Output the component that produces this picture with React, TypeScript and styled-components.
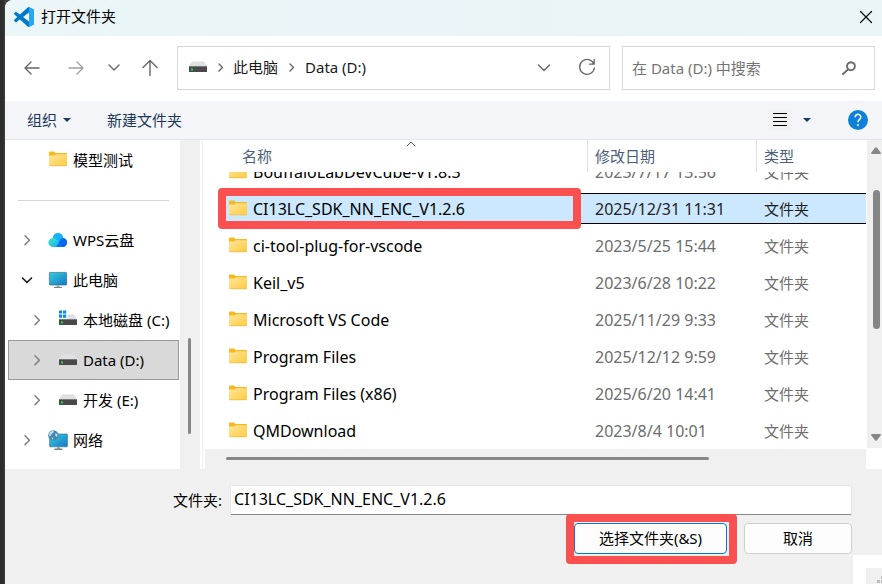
import React, { useState } from "react";
import styled, { createGlobalStyle, css } from "styled-components";

const GlobalStyle = createGlobalStyle`
  *, *::before, *::after { box-sizing: border-box; }
  body { margin: 0; background: #2b2b2b; }
  body, button, input, table {
    font-family: "Noto Sans", "Noto Sans CJK SC", sans-serif;
    font-size: 15px;
    line-height: 20px;
    color: #000;
  }
  button { padding: 0; border: 0; background: none; cursor: default; }
  svg { display: block; flex: none; }
`;

const Desktop = styled.div`
  min-height: 100vh;
  display: flex;
  padding-left: 5px;
  background: linear-gradient(90deg, #2d2d2d 3px, #404040 5px);
`;

const Dialog = styled.main`
  flex: 1;
  min-width: 0;
  display: flex;
  flex-direction: column;
  overflow: hidden;
  border-top-left-radius: 8px;
  background: #f0f0f0;
`;

const TitleBar = styled.header`
  display: flex;
  align-items: center;
  gap: 7px;
  height: 36px;
  padding: 0 8px 2px 9px;
  background: linear-gradient(90deg, #eaf6f7, #ebf4f8 40%, #e9f5f6);
`;

const Title = styled.h1`
  flex: 1;
  margin: 0;
  padding-bottom: 2px;
  font-size: 15px;
  line-height: 20px;
  font-weight: 400;
`;

const IconButton = styled.button<{ $w?: number }>`
  display: flex;
  align-items: center;
  justify-content: center;
  width: ${(p) => p.$w ?? 20}px;
  height: 20px;
  color: inherit;
`;

const NavBar = styled.nav`
  display: grid;
  grid-template-columns: 143px minmax(0, 433fr) minmax(0, 253fr);
  align-items: center;
  column-gap: 12px;
  padding: 10px 7px 11px 17px;
  background: #fff;
  color: #666;
`;

const NavButtons = styled.div`
  display: flex;
  align-items: center;
  gap: 19px;
`;

const fieldBox = css`
  display: flex;
  align-items: center;
  height: 44px;
  border: 1px solid #d9d9d9;
  background: #fff;
`;

const AddressBar = styled.div`
  ${fieldBox}
  padding: 0 12px 2px 10px;
  gap: 8px;
  color: #666;
`;

const Crumb = styled.button`
  color: #1a1a1a;
  white-space: nowrap;
`;

const AddressActions = styled.div`
  display: flex;
  gap: 23px;
  margin-left: auto;
`;

const SearchBox = styled.label`
  ${fieldBox}
  padding: 0 17px 0 9px;
`;

const SearchInput = styled.input`
  flex: 1;
  min-width: 0;
  padding: 0;
  border: 0;
  outline: 0;
  background: none;
  &::placeholder { color: #757575; opacity: 1; }
`;

const Toolbar = styled.div`
  display: flex;
  align-items: center;
  height: 39px;
  padding: 0 7px 0 22px;
  border-bottom: 1px solid #e5e5e5;
  background: #f4f5f8;
`;

const ToolButton = styled.button`
  display: flex;
  align-items: center;
  gap: 6px;
  margin-right: 36px;
  color: #1e395b;
`;

const ToolbarEnd = styled.div`
  display: flex;
  align-items: center;
  margin-left: auto;
  color: #1e395b;
`;

const ViewButton = styled(IconButton)`
  background: #f2f2f2;
  color: #000;
  margin-right: 12px;
`;

const HelpButton = styled(IconButton)`
  margin-left: 30px;
`;

const Body = styled.div`
  display: flex;
  background: #fff;
`;

const Tree = styled.ul`
  width: 175px;
  margin: 0;
  padding: 0 1px 9px 3px;
  list-style: none;
`;

const TreeRow = styled.li<{ $level: number; $selected?: boolean }>`
  height: 40px;
  border: 1px solid ${(p) => (p.$selected ? "#999" : "transparent")};
  background: ${(p) => (p.$selected ? "#d9d9d9" : "transparent")};
  padding-left: ${(p) => 8 + p.$level * 10}px;
`;

const TreeButton = styled.button`
  display: flex;
  align-items: center;
  width: 100%;
  height: 38px;
  white-space: nowrap;
`;

const Twisty = styled.span`
  width: 20px;
  color: #808080;
`;

const TreeIcon = styled.span`
  width: 20px;
  margin: 0 5px 0 11px;
`;

const TreeDivider = styled.li`
  height: 40px;
  padding: 20px 10px 0 10px;
  &::before {
    content: "";
    display: block;
    height: 1px;
    background: #d4d4d4;
  }
`;

const TreeScroll = styled.div`
  display: flex;
  align-items: flex-end;
  width: 20px;
  padding: 0 0 35px 8px;
  background: #f0f0f0;
`;

const Thumb = styled.div<{ $w: number; $h: number }>`
  width: ${(p) => p.$w}px;
  height: ${(p) => p.$h}px;
  border-radius: 4px;
  background: #868686;
`;

const Splitter = styled.div`
  width: 3px;
  margin-left: 2px;
  border-left: 1px solid #f0f0f0;
`;

const ListPane = styled.section`
  flex: 1;
  min-width: 0;
  display: flex;
  flex-direction: column;
`;

const FileTable = styled.table`
  display: block;
  height: 309px;
  overflow: hidden;
`;

const columns = css`
  display: grid;
  grid-template-columns: minmax(0, 1fr) 169px 110px;
`;

const Head = styled.thead`
  display: block;
  height: 32px;
`;

const HeadRow = styled.tr`
  ${columns}
  height: 32px;
`;

const HeadCell = styled.th<{ $first?: boolean }>`
  position: relative;
  padding: 6px 0 0 ${(p) => (p.$first ? 37 : 7)}px;
  border-left: ${(p) => (p.$first ? 0 : 1)}px solid #e2e2e2;
  font-weight: 400;
  text-align: left;
  color: #4c607a;
`;

const SortMark = styled.span`
  position: absolute;
  top: 1px;
  right: 171px;
`;

const Rows = styled.tbody`
  display: block;
  overflow: hidden;
  height: 277px;
`;

const FileRow = styled.tr<{ $selected?: boolean }>`
  ${columns}
  height: 31px;
  margin: 0 0 6px 18px;
  border: solid ${(p) => (p.$selected ? "#000" : "transparent")};
  border-width: 1px 0;
  background: ${(p) => (p.$selected ? "#cce8ff" : "transparent")};
  color: ${(p) => (p.$selected ? "#1f1f1f" : "#6d6d6d")};
  &:first-child { margin-top: -16px; }
`;

const Cell = styled.td<{ $large?: boolean }>`
  padding: 5px 0 0 8px;
  font-size: ${(p) => (p.$large ? 16 : 15)}px;
  white-space: nowrap;
`;

const NameCell = styled.td<{ $marked?: boolean }>`
  position: relative;
  display: flex;
  align-items: center;
  gap: 5px;
  padding: 0 0 0 5px;
  font-size: 16px;
  color: #000;
  white-space: nowrap;
  ${(p) =>
    p.$marked &&
    css`
      &::after {
        content: "";
        position: absolute;
        inset: -6px 6px -6px -5px;
        border: 8px solid #fb5050;
        border-radius: 4px;
      }
    `}
`;

const HScroll = styled.div`
  display: flex;
  align-items: center;
  height: 20px;
  padding: 0 157px 2px 21px;
  background: #f0f0f0;
`;

const HThumb = styled.div`
  flex: 1;
  height: 3px;
  border-radius: 2px;
  background: #868686;
`;

const VScroll = styled.div`
  display: flex;
  flex-direction: column;
  align-items: center;
  width: 15px;
  height: 308px;
  margin-left: 1px;
  padding: 7px 0 7px 3px;
  background: #f0f0f0;
  color: #868686;
`;

const VTrack = styled.div`
  flex: 1;
  padding-top: 35px;
`;

const Footer = styled.form`
  position: relative;
  flex: 1;
  padding: 16px 30px 30px 168px;
`;

const FolderField = styled.label`
  display: flex;
  align-items: center;
  gap: 8px;
  white-space: nowrap;
`;

const FolderInput = styled.input`
  flex: 1;
  min-width: 0;
  height: 30px;
  padding: 0 3px 3px;
  border: 1px solid #e6e6e6;
  border-bottom-color: #868686;
  border-radius: 2px;
  outline: 0;
  background: #fff;
  font-size: 16px;
`;

const Actions = styled.div`
  display: flex;
  justify-content: flex-end;
  gap: 17px;
  margin-top: 8px;
`;

const Marked = styled.div`
  position: relative;
  &::after {
    content: "";
    position: absolute;
    inset: -9px -10px -10px -8px;
    border: 8px solid #fb5050;
    border-radius: 4px;
    pointer-events: none;
  }
`;

const PushButton = styled.button<{ $primary?: boolean }>`
  width: ${(p) => (p.$primary ? 153 : 108)}px;
  height: 31px;
  padding-bottom: 2px;
  border: 1px solid ${(p) => (p.$primary ? "#0078d4" : "#cfcfcf")};
  border-radius: 4px;
  background: #fdfdfd;
`;

const Corner = styled.div`
  position: absolute;
  right: 0;
  bottom: 0;
  padding: 13px 0 0 13px;
  background: #fff;
`;

const Grip = styled.div`
  width: 16px;
  height: 16px;
  background: #f0f0f0;
`;

type IconProps = { d: string; w?: number; h?: number; sw?: number; color?: string };

const Stroke = ({ d, w = 20, h = 20, sw = 1.4, color = "currentColor" }: IconProps) => (
  <svg width={w} height={h} viewBox={`0 0 ${w} ${h}`} fill="none" stroke={color} strokeWidth={sw} strokeLinecap="round" strokeLinejoin="round">
    <path d={d} />
  </svg>
);

const Caret = () => (
  <svg width="8" height="4" viewBox="0 0 8 4"><path d="M0 0H8L4 4Z" fill="currentColor" /></svg>
);

const CodeLogo = () => (
  <svg width="20" height="20" viewBox="0 0 24 24">
    <path fill="#0078c8" fillRule="evenodd" d="M23.15 2.587L18.21.21a1.494 1.494 0 0 0-1.705.29l-9.46 8.63-4.12-3.128a.999.999 0 0 0-1.276.057L.327 7.261A1 1 0 0 0 .326 8.74L3.899 12 .326 15.26a1 1 0 0 0 .001 1.479L1.65 17.94a.999.999 0 0 0 1.276.057l4.12-3.128 9.46 8.63a1.492 1.492 0 0 0 1.704.29l4.942-2.377A1.5 1.5 0 0 0 24 20.06V3.939a1.5 1.5 0 0 0-.85-1.352zm-5.146 14.861L10.826 12l7.178-5.448v10.896z" />
    <path fill="#2aa7f0" d="M18.2.2 23.15 2.587A1.5 1.5 0 0 1 24 3.94V20.06a1.5 1.5 0 0 1-.85 1.35L18.2 23.8Q17.3 24.1 16.6 23.5 18 23.9 18 22.4V1.6Q18 .1 16.6.5 17.3-.1 18.2.2Z" />
  </svg>
);

const FolderIcon = () => (
  <svg width="20" height="18" viewBox="0 0 20 18">
    <defs>
      <linearGradient id="folder" x1="0" y1="0" x2="1" y2="1">
        <stop offset="0" stopColor="#ffe6a0" />
        <stop offset="1" stopColor="#ffcb3d" />
      </linearGradient>
    </defs>
    <path d="M1 1.6Q1 .6 2 .6H6L7.6 2H18.4Q19 2 19 2.8V8H1Z" fill="#f8b91f" />
    <path d="M1 4.6H6.5L7.8 3.2H19V14.2Q19 15 18.2 15H1.8Q1 15 1 14.2Z" fill="url(#folder)" />
    <path d="M1.5 14.8H18.5" stroke="#e9b23a" strokeWidth=".6" />
  </svg>
);

const DriveIcon = ({ system = false }: { system?: boolean }) => (
  <svg width="20" height="20" viewBox="0 0 20 20">
    <path d="M4 4.6H16L19 9V10H1V9Z" fill="#dfe0e3" />
    <rect x="1" y="9" width="18" height="6" rx=".5" fill="#48494b" />
    <path d="M1 9.5H19" stroke="#77787a" strokeWidth="1" />
    <rect x="3" y="11.5" width="2" height="2" fill="#2be03a" />
    {system && <rect x="0" y="0" width="9.5" height="8.6" fill="#fff" />}
    {system && <path d="M1 .4h3.2v3.2H1zM5 .4h3.2v3.2H5zM1 4.5h3.2v3.2H1zM5 4.5h3.2v3.2H5z" fill="#1187dc" />}
  </svg>
);

const CloudIcon = () => (
  <svg width="20" height="20" viewBox="0 0 20 20">
    <defs>
      <linearGradient id="cloud" x1="0" y1="0" x2="1" y2="1">
        <stop offset="0" stopColor="#13b8ff" />
        <stop offset="1" stopColor="#0b55e8" />
      </linearGradient>
      <linearGradient id="cloudLeft" x1="0" y1="0" x2="1" y2="1">
        <stop offset="0" stopColor="#3fe9c0" />
        <stop offset="1" stopColor="#14a6f6" />
      </linearGradient>
    </defs>
    <circle cx="10" cy="8" r="5.2" fill="#16b4ff" />
    <path d="M8 17 12 9.5Q13.5 7.3 16 8.2A4.6 4.6 0 0 1 15 17Z" fill="url(#cloud)" />
    <path d="M5 17A4.5 4.5 0 1 1 8.2 9.4Q10.5 11 14 17Z" fill="url(#cloudLeft)" />
    <path d="M8 17 13 9Q16 6.5 18.5 10A4.6 4.6 0 0 1 15 17Z" fill="#0a5fec" opacity=".75" />
  </svg>
);

const screenDefs = (
  <defs>
    <linearGradient id="screen" x1="0" y1="0" x2="1" y2="1">
      <stop offset="0" stopColor="#36d0dc" />
      <stop offset="1" stopColor="#1577c8" />
    </linearGradient>
  </defs>
);

const MonitorIcon = () => (
  <svg width="20" height="20" viewBox="0 0 20 20">
    {screenDefs}
    <rect x="1.4" y="2.4" width="17.2" height="12.6" rx=".6" fill="url(#screen)" stroke="#3b6c86" strokeWidth=".7" />
    <path d="M8.5 15.4h3v1.6h-3z" fill="#a6abb0" />
    <path d="M6 17.4h8" stroke="#6d747a" strokeWidth="1" />
  </svg>
);

const NetworkIcon = () => (
  <svg width="20" height="20" viewBox="0 0 20 20">
    {screenDefs}
    <rect x="1.6" y="4" width="17.8" height="12.8" rx=".6" fill="url(#screen)" stroke="#3b7f9b" strokeWidth=".7" />
    <path d="M9 17h3v1.8H9z" fill="#a6abb0" />
    <path d="M6.4 19.2h8" stroke="#59636b" strokeWidth="1.2" />
    <circle cx="5.4" cy="5.4" r="5.2" fill="#4587b0" />
    <path d="M1.8 2.6Q3.6.6 6 .8L5.2 3 3.6 3.8 3 5.4 1.4 6.4Q.8 4.4 1.8 2.6ZM7.5 3 9.6 4.6 8.8 7 7.2 5.8ZM3.4 7.4 5.6 8 4.8 9.8Z" fill="#c4e0ee" />
  </svg>
);

type TreeItem = { label: string; level: number; icon: React.ReactNode; open?: boolean; leaf?: boolean };

const places: TreeItem[] = [
  { label: "WPS云盘", level: 0, icon: <CloudIcon /> },
  { label: "此电脑", level: 0, icon: <MonitorIcon />, open: true },
  { label: "本地磁盘 (C:)", level: 1, icon: <DriveIcon system /> },
  { label: "Data (D:)", level: 1, icon: <DriveIcon /> },
  { label: "开发 (E:)", level: 1, icon: <DriveIcon /> },
  { label: "网络", level: 0, icon: <NetworkIcon /> },
];

const files = [
  ["BouffaloLabDevCube-v1.8.3", "2023/7/17 13:56"],
  ["CI13LC_SDK_NN_ENC_V1.2.6", "2025/12/31 11:31"],
  ["ci-tool-plug-for-vscode", "2023/5/25 15:44"],
  ["Keil_v5", "2023/6/28 10:22"],
  ["Microsoft VS Code", "2025/11/29 9:33"],
  ["Program Files", "2025/12/12 9:59"],
  ["Program Files (x86)", "2025/6/20 14:41"],
  ["QMDownload", "2023/8/4 10:01"],
];

const Place = ({ item }: { item: TreeItem }) => (
  <TreeRow $level={item.level} $selected={item.label === "Data (D:)"}>
    <TreeButton type="button">
      <Twisty>
        {!item.leaf && (item.open ? <Stroke d="M5.5 8 10 12.5 14.5 8" sw={1.7} color="#222" /> : <Stroke d="M8 5.8 12.4 10.2 8 14.6" sw={1.5} />)}
      </Twisty>
      <TreeIcon>{item.icon}</TreeIcon>
      {item.label}
    </TreeButton>
  </TreeRow>
);

export default function App() {
  const [folder, setFolder] = useState("CI13LC_SDK_NN_ENC_V1.2.6");
  const selected = "CI13LC_SDK_NN_ENC_V1.2.6";

  return (
    <Desktop>
      <GlobalStyle />
      <Dialog>
        <TitleBar>
          <CodeLogo />
          <Title>打开文件夹</Title>
          <IconButton type="button" aria-label="关闭" $w={16}>
            <Stroke w={16} h={16} d="M2.5 2.5 13.5 13.5M13.5 2.5 2.5 13.5" sw={1.3} color="#111" />
          </IconButton>
        </TitleBar>

        <NavBar>
          <NavButtons>
            <IconButton type="button" aria-label="后退" $w={20}><Stroke d="M17 10H3M9 4 3 10 9 16" /></IconButton>
            <IconButton type="button" aria-label="前进" $w={30}><Stroke color="#a0a0a0" d="M3 10H17M11 4 17 10 11 16" /></IconButton>
            <IconButton type="button" aria-label="最近浏览的位置" $w={8}><Stroke d="M5 7 10 12 15 7" /></IconButton>
            <IconButton type="button" aria-label="上移" $w={26}><Stroke d="M10 17.5V3M3 9.5 10 2.5 17 9.5" /></IconButton>
          </NavButtons>
          <AddressBar>
            <DriveIcon />
            <Stroke w={9} d="M3 7 6.5 10.5 3 14" />
            <Crumb type="button">此电脑</Crumb>
            <Stroke w={11} d="M4 7 7.5 10.5 4 14" />
            <Crumb type="button">Data (D:)</Crumb>
            <AddressActions>
              <IconButton type="button" aria-label="以前的位置"><Stroke d="M4.5 8 10 13.5 15.5 8" /></IconButton>
              <IconButton type="button" aria-label="刷新"><Stroke d="M17 7.2A7.4 7.4 0 1 0 17.4 11M17.2 2.5V7.2H12.5" sw={1.3} /></IconButton>
            </AddressActions>
          </AddressBar>
          <SearchBox>
            <SearchInput type="text" aria-label="搜索" placeholder="在 Data (D:) 中搜索" />
            <Stroke w={16} d="M10 4.2A4 4 0 1 1 9.9 4.2M7.2 11.2 2 16" sw={1.9} color="#6a6a6a" />
          </SearchBox>
        </NavBar>

        <Toolbar>
          <ToolButton type="button">组织 <Caret /></ToolButton>
          <ToolButton type="button">新建文件夹</ToolButton>
          <ToolbarEnd>
            <ViewButton type="button" aria-label="视图">
              <svg width="14" height="14" viewBox="0 0 14 14"><path d="M0 .5H14M0 4.5H14M0 8.5H14M0 12.5H14" stroke="#000" /></svg>
            </ViewButton>
            <IconButton type="button" aria-label="更改视图" $w={9}><Caret /></IconButton>
            <HelpButton type="button" aria-label="帮助" $w={34}>
              <svg width="20" height="20" viewBox="0 0 20 20">
                <circle cx="10" cy="10" r="10" fill="#0f80d8" />
                <path d="M7.2 7.2A2.8 2.8 0 1 1 11.6 9.4Q10 10.5 10 12.2" fill="none" stroke="#fff" strokeWidth="1.5" />
                <circle cx="10" cy="15" r="1" fill="#fff" />
              </svg>
            </HelpButton>
          </ToolbarEnd>
        </Toolbar>

        <Body>
          <Tree>
            <Place item={{ label: "模型测试", level: 0, icon: <FolderIcon />, leaf: true }} />
            <TreeDivider />
            {places.map((item) => <Place key={item.label} item={item} />)}
          </Tree>
          <TreeScroll><Thumb $w={3} $h={96} /></TreeScroll>
          <Splitter />
          <ListPane>
            <FileTable>
              <Head>
                <HeadRow>
                  <HeadCell $first>
                    名称
                    <SortMark><Stroke w={10} h={6} d="M1 5 5 1 9 5" sw={1} color="#555" /></SortMark>
                  </HeadCell>
                  <HeadCell>修改日期</HeadCell>
                  <HeadCell>类型</HeadCell>
                </HeadRow>
              </Head>
              <Rows>
                {files.map(([name, date]) => (
                  <FileRow key={name} $selected={name === selected}>
                    <NameCell $marked={name === selected}><FolderIcon />{name}</NameCell>
                    <Cell $large>{date}</Cell>
                    <Cell>文件夹</Cell>
                  </FileRow>
                ))}
              </Rows>
            </FileTable>
            <HScroll><HThumb /></HScroll>
          </ListPane>
          <VScroll>
            <svg width="10" height="8" viewBox="0 0 10 8"><path d="M4 .7Q5-.3 6 .7L10 6Q10 7 9 7H1Q0 7 0 6Z" fill="currentColor" /></svg>
            <VTrack><Thumb $w={7} $h={139} /></VTrack>
            <svg width="10" height="8" viewBox="0 0 10 8"><path d="M4 7.3Q5 8.3 6 7.3L10 2Q10 1 9 1H1Q0 1 0 2Z" fill="currentColor" /></svg>
          </VScroll>
        </Body>

        <Footer onSubmit={(e) => e.preventDefault()}>
          <FolderField>
            文件夹:
            <FolderInput type="text" value={folder} onChange={(e) => setFolder(e.target.value)} />
          </FolderField>
          <Actions>
            <Marked><PushButton type="submit" $primary>选择文件夹(&amp;S)</PushButton></Marked>
            <PushButton type="button">取消</PushButton>
          </Actions>
          <Corner>
            <Grip>
              <svg width="16" height="16" viewBox="0 0 16 16"><path d="M15 8h3v3h-3zM11 12h3v3h-3zM15 12h3v3h-3z" fill="#bcbcbc" /></svg>
            </Grip>
          </Corner>
        </Footer>
      </Dialog>
    </Desktop>
  );
}
